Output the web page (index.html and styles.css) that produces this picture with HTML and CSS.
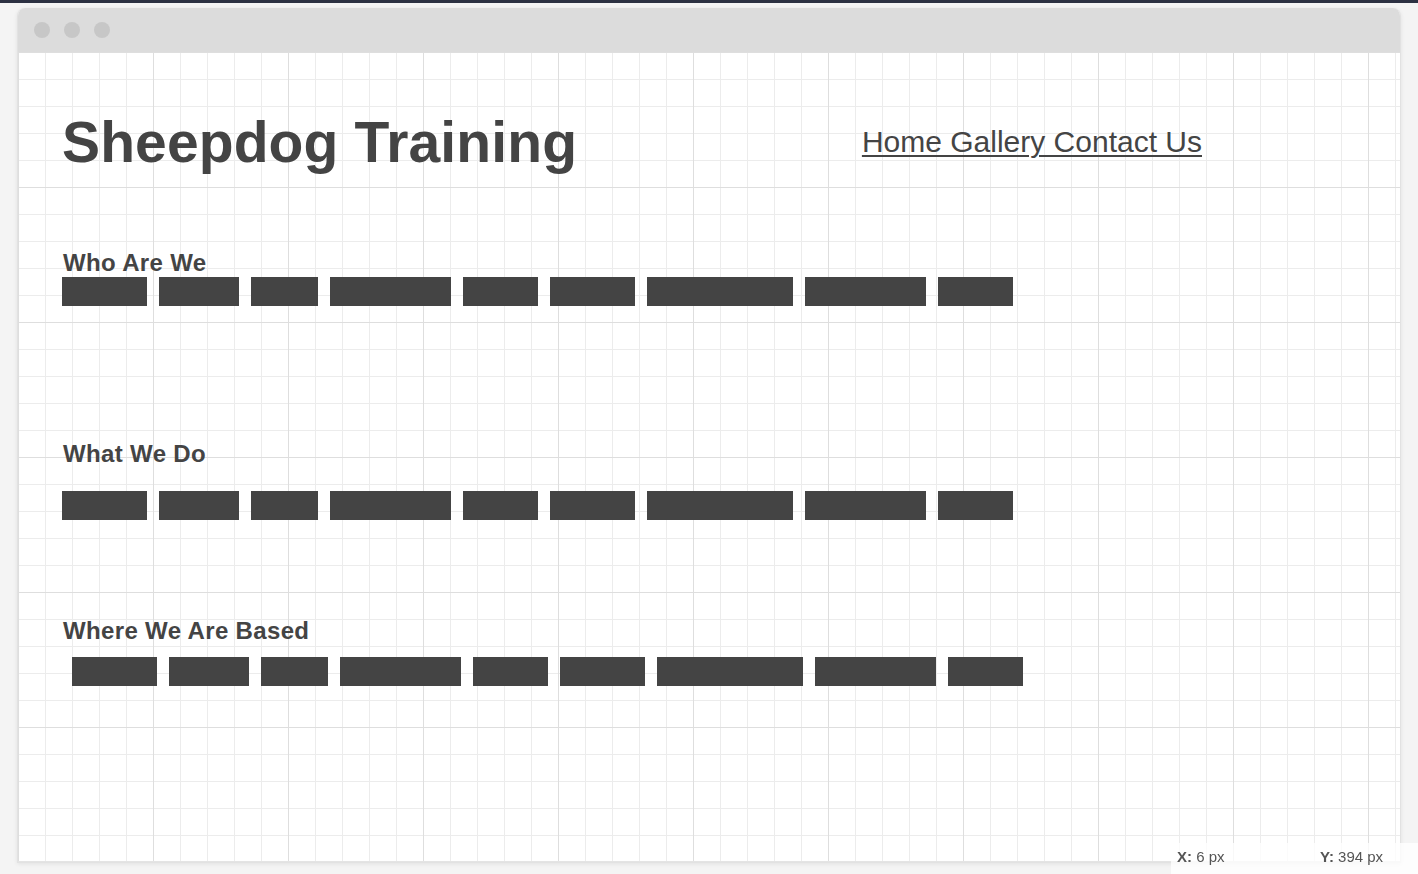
FILE: index.html
```html
<!DOCTYPE html>
<html lang="en">
<head>
<meta charset="utf-8">
<title>Sheepdog Training</title>
<link rel="stylesheet" href="styles.css">
</head>
<body>
<div class="topbar"></div>
<div class="page">
  <div class="window">
    <div class="titlebar">
      <span class="dot"></span><span class="dot"></span><span class="dot"></span>
    </div>
    <div class="canvas">
      <header class="site-header">
        <h1 class="site-title">Sheepdog Training</h1>
        <nav class="site-nav"><a href="#">Home Gallery Contact Us</a></nav>
      </header>
      <section class="block block-who">
        <h2 class="block-title">Who Are We</h2>
        <div class="redacted">
          <span></span><span></span><span></span><span></span><span></span><span></span><span></span><span></span><span></span>
        </div>
      </section>
      <section class="block block-what">
        <h2 class="block-title">What We Do</h2>
        <div class="redacted">
          <span></span><span></span><span></span><span></span><span></span><span></span><span></span><span></span><span></span>
        </div>
      </section>
      <section class="block block-where">
        <h2 class="block-title">Where We Are Based</h2>
        <div class="redacted redacted-indent">
          <span></span><span></span><span></span><span></span><span></span><span></span><span></span><span></span><span></span>
        </div>
      </section>
    </div>
  </div>
</div>
<div class="coords"><span class="coord coord-x"><b>X:</b> 6 px</span><span class="coord coord-y"><b>Y:</b> 394 px</span></div>
</body>
</html>
```
FILE: styles.css
```css
* { box-sizing: border-box; }
html, body { margin: 0; padding: 0; }
body {
  background: #f4f4f4;
  font-family: "Liberation Sans", Arial, sans-serif;
  color: #444;
  width: 1418px;
  height: 874px;
  overflow: hidden;
}
.topbar {
  height: 3px;
  background: #2c3142;
}
.page {
  padding: 5px 17px 0 17px;
}
.window {
  width: 1384px;
  height: 855px;
  border: 1px solid #e2e2e2;
  border-top: none;
  border-radius: 8px 8px 0 0;
  background: #fff;
  box-shadow: 0 1px 4px rgba(0,0,0,0.08);
  overflow: hidden;
}
.titlebar {
  height: 44px;
  background: #dcdcdc;
  display: flex;
  align-items: center;
  gap: 14px;
  padding-left: 16px;
}
.dot {
  width: 16px;
  height: 16px;
  border-radius: 50%;
  background: #c7c7c7;
}
.canvas {
  height: 811px;
  background-color: #fff;
  background-image:
    linear-gradient(to right, #dedede 1px, transparent 1px),
    linear-gradient(to bottom, #dedede 1px, transparent 1px),
    linear-gradient(to right, #ececec 1px, transparent 1px),
    linear-gradient(to bottom, #ececec 1px, transparent 1px);
  background-size: 135px 135px, 135px 135px, 27px 27px, 27px 27px;
  padding: 62px 198px 0 44px;
  border-bottom: 2px solid #e4e4e4;
}
.site-header {
  display: flex;
  align-items: flex-start;
}
.site-title {
  margin: 0;
  font-size: 57px;
  line-height: 57px;
  font-weight: 700;
  letter-spacing: 0.12px;
  color: #444;
}
.site-nav {
  margin-left: auto;
  margin-top: 13px;
  font-size: 30px;
  line-height: 30px;
}
.site-nav a {
  color: #444;
  text-decoration: underline;
  text-decoration-thickness: 2px;
  text-underline-offset: 3px;
}
.block-title {
  margin: 0;
  padding-left: 1px;
  font-size: 24px;
  line-height: 24px;
  font-weight: 700;
  letter-spacing: 0.35px;
  color: #444;
}
.block-who { margin-top: 80px; }
.block-who .redacted { margin-top: 2px; }
.block-what { margin-top: 136px; }
.block-what .redacted { margin-top: 25px; }
.block-where { margin-top: 99px; }
.block-where .redacted { margin-top: 14px; }
.redacted {
  display: flex;
  gap: 12px;
}
.redacted-indent { padding-left: 10px; }
.redacted span {
  display: block;
  height: 29px;
  background: #444;
}
.redacted span:nth-child(1) { width: 85px; }
.redacted span:nth-child(2) { width: 80px; }
.redacted span:nth-child(3) { width: 67px; }
.redacted span:nth-child(4) { width: 121px; }
.redacted span:nth-child(5) { width: 75px; }
.redacted span:nth-child(6) { width: 85px; }
.redacted span:nth-child(7) { width: 146px; }
.redacted span:nth-child(8) { width: 121px; }
.redacted span:nth-child(9) { width: 75px; }
.coords {
  position: fixed;
  left: 1171px;
  top: 843px;
  width: 247px;
  height: 31px;
  background: rgba(255,255,255,0.78);
  font-size: 15px;
  line-height: 15px;
  color: #555;
  display: flex;
  padding: 6px 0 0 6px;
}
.coord b { font-weight: 700; }
.coord-x { width: 143px; }
```
